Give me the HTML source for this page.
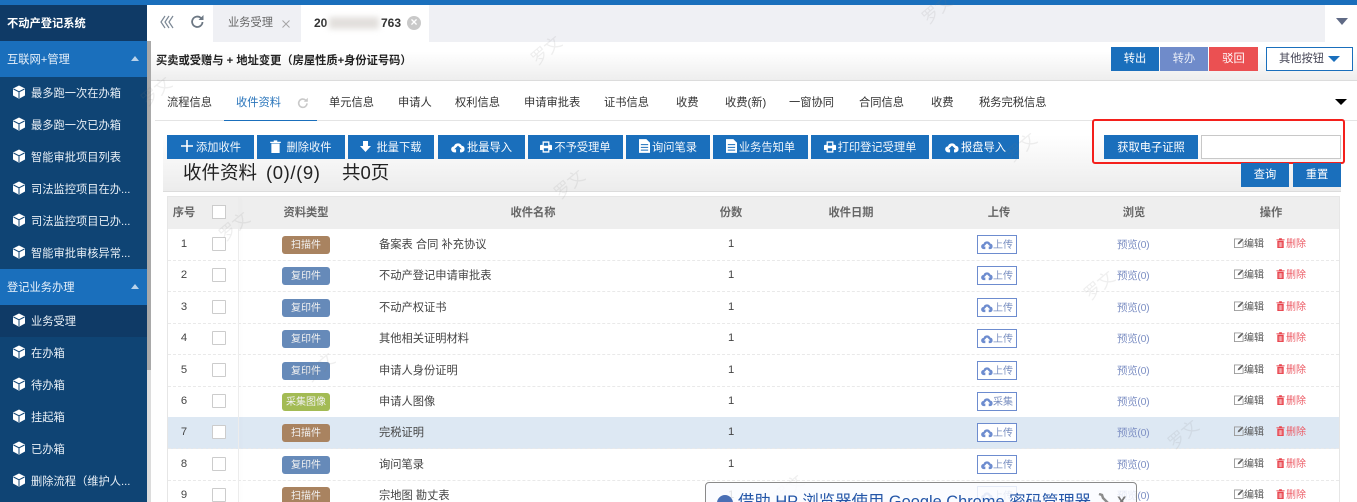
<!DOCTYPE html>
<html lang="zh-CN"><head><meta charset="utf-8"><title>不动产登记系统</title>
<style>
html,body{margin:0;padding:0;width:1357px;height:502px;overflow:hidden;background:#fff}
body{position:relative;font:11.25px/18px "Liberation Sans","Noto Sans CJK SC",sans-serif;color:#333}
div,span,svg{position:absolute;box-sizing:border-box;white-space:nowrap}
.sec{left:0;width:147px;height:36px;background:#1a6fbc;color:#e8f1fa;line-height:38px;padding-left:7px}
.sec i{position:absolute;left:131px;top:15px;width:0;height:0;border:4px solid transparent;border-top:0;border-left-width:4px;border-bottom:5px solid #b9d2ea}
.it{left:0;width:147px;height:32px;line-height:34px;color:#e9f0f7;padding-left:31px}
.it svg{left:12px;top:8px}
.nv{top:93px;color:#333;line-height:20px}
.b{top:135px;height:24px;background:#1a6fbc;color:#f2f7fc;line-height:26px;text-align:center}
.b svg{position:static;vertical-align:-2px;margin-right:2px}
.t{top:205px;color:#666;font-weight:bold;transform:translateX(-50%);line-height:16px}
.r{left:168px;width:1171px;height:32px;border-bottom:1px dashed #e9e9e9}
.r .n{left:0;width:32px;text-align:center;top:6px;color:#444}
.r .c{left:44px;top:8px;width:14px;height:14px;border:1px solid #ccc;background:#fff;border-radius:1px}
.bd{left:114px;top:7px;width:48px;height:18px;border-radius:3px;color:#f1f1f1;text-align:center;line-height:20px;font-size:10px}
.s{background:#a98360}.f{background:#668ab9}.g{background:#a3bb54}
.nm{left:211px;top:7px;color:#444}
.q{left:560px;top:6px;color:#444}
.u{left:809px;top:6px;width:40px;height:19px;border:1px solid #6d8ccf;color:#7a8fc0;line-height:19px;padding-left:15px;background:#fff;font-size:10px}
.u svg{left:3px;top:4px}
.p{left:949px;top:7px;color:#7e90c4;font-size:10.5px;letter-spacing:-.3px}
.e{left:1076px;top:7px;color:#555;font-size:10px}
.d{left:1118px;top:7px;color:#ec5a64;font-size:10px}
.ei{left:1066px;top:9px}.di{left:1108px;top:9px}
.wm{width:36px;height:20px;text-align:center;color:rgba(120,120,120,.12);font-size:17px;transform:rotate(-40deg);line-height:20px}
</style></head><body>
<svg width="0" height="0" style="left:0;top:0"><defs>
<symbol id="cube" viewBox="0 0 14 14"><path d="M7 .5l6 3v7l-6 3.2-6-3.2v-7z" fill="#fff"/><path d="M1.500 4L7 6.800 12.500 4M7 6.800v6.500" stroke="#0f4474" stroke-width="1" fill="none"/></symbol>
<symbol id="cloud" viewBox="0 0 16 12"><path d="M4 11.500a3.500 3.500 0 0 1-.6-7A4.800 4.800 0 0 1 12.300 4a3.800 3.800 0 0 1 0 7.500h-2V8h2L8 3.800 3.800 8h2v3.500z" fill="currentColor"/></symbol>
<symbol id="doc" viewBox="0 0 12 15"><path d="M0 0h8l4 4v11H0z" fill="#fff"/><path d="M2 6h8M2 9h8M2 12h8" stroke="#1a6fbc"/></symbol>
<symbol id="pr" viewBox="0 0 14 13"><path d="M3 0h8v4h2a1 1 0 0 1 1 1v5h-3v3H3v-3H0V5a1 1 0 0 1 1-1h2zM4.500 1.500V5h5V1.500zM4.500 8v3.500h5V8z" fill="#fff" fill-rule="evenodd"/></symbol>
<symbol id="ed" viewBox="0 0 11 11"><path d="M8 1H.5v9.500H10V4" fill="none" stroke="#999"/><path d="M4 7l.6-2L9 .6l1.400 1.400L6 6.400z" fill="#666"/></symbol>
<symbol id="tr" viewBox="0 0 9 11"><path d="M0 1.500h3V.3h3v1.200h3v1H0zM1 3h7v8H1z" fill="#e8434c"/><path d="M3 4.500V10M4.500 4.500V10M6 4.500V10" stroke="#fff" stroke-width=".6"/></symbol>
</defs></svg>

<!-- top strip -->
<div style="left:0;top:0;width:1357px;height:5px;background:#1a6fbc"></div>

<!-- sidebar -->
<div style="left:0;top:5px;width:147px;height:497px;background:#0f4474"></div>
<div style="left:147px;top:41px;width:4px;height:461px;background:#dcdcdc"></div>
<div style="left:147px;top:41px;width:4px;height:329px;background:#a9a9a9"></div>
<div style="left:0;top:5px;width:147px;height:36px;background:#0f3a66;color:#fff;line-height:38px;padding-left:7px;font-weight:bold">不动产登记系统</div>
<div class="sec" style="top:41px">互联网+管理<i></i></div>
<div class="it" style="top:77px"><svg width="14" height="14"><use href="#cube"/></svg>最多跑一次在办箱</div>
<div class="it" style="top:109px"><svg width="14" height="14"><use href="#cube"/></svg>最多跑一次已办箱</div>
<div class="it" style="top:141px"><svg width="14" height="14"><use href="#cube"/></svg>智能审批项目列表</div>
<div class="it" style="top:173px"><svg width="14" height="14"><use href="#cube"/></svg>司法监控项目在办...</div>
<div class="it" style="top:205px"><svg width="14" height="14"><use href="#cube"/></svg>司法监控项目已办...</div>
<div class="it" style="top:237px"><svg width="14" height="14"><use href="#cube"/></svg>智能审批审核异常...</div>
<div class="sec" style="top:269px">登记业务办理<i></i></div>
<div class="it" style="top:305px;background:#0f3a66"><svg width="14" height="14"><use href="#cube"/></svg>业务受理</div>
<div class="it" style="top:337px"><svg width="14" height="14"><use href="#cube"/></svg>在办箱</div>
<div class="it" style="top:369px"><svg width="14" height="14"><use href="#cube"/></svg>待办箱</div>
<div class="it" style="top:401px"><svg width="14" height="14"><use href="#cube"/></svg>挂起箱</div>
<div class="it" style="top:433px"><svg width="14" height="14"><use href="#cube"/></svg>已办箱</div>
<div class="it" style="top:465px"><svg width="14" height="14"><use href="#cube"/></svg>删除流程（维护人...</div>

<!-- tab bar -->
<div style="left:151px;top:5px;width:1206px;height:37px;background:#eff0f4"></div>
<div style="left:151px;top:5px;width:62px;height:37px;background:#fff"></div>
<svg style="left:160px;top:15px" width="14" height="14" viewBox="0 0 14 14"><path d="M5 1L1 7l4 6M9 1L5 7l4 6M13 1L9 7l4 6" fill="none" stroke="#7b8794" stroke-width="1.200"/></svg>
<svg style="left:190px;top:14px" width="15" height="15" viewBox="0 0 15 15"><path d="M12.500 8a5.200 5.200 0 1 1-1.600-4" fill="none" stroke="#6d7884" stroke-width="1.800"/><path d="M13.500 1v5h-5z" fill="#6d7884"/></svg>
<div style="left:228px;top:14px;color:#666">业务受理</div>
<svg style="left:282px;top:20px" width="8" height="8" viewBox="0 0 8 8"><path d="M.5.5l7 7M7.500.5l-7 7" stroke="#a5a5a5" stroke-width="1"/></svg>
<div style="left:301px;top:5px;width:128px;height:37px;background:#fff"></div>
<div style="left:314px;top:14px;color:#333;font-weight:bold;font-size:12px">20</div>
<div style="left:329px;top:17px;width:50px;height:12px;background:#e2dfdc;filter:blur(3px)"></div>
<div style="left:381px;top:14px;color:#333;font-weight:bold;font-size:12px">763</div>
<div style="left:407px;top:16px;width:14px;height:14px;border-radius:50%;background:#c9c9c9;color:#fff;text-align:center;line-height:13px;font-weight:bold;font-size:12px">×</div>
<div style="left:1325px;top:5px;width:32px;height:37px;background:#fff"></div>
<div style="left:1336px;top:18px;width:0;height:0;border-left:6px solid transparent;border-right:6px solid transparent;border-top:7px solid #5f6a85"></div>

<!-- title bar -->
<div style="left:151px;top:42px;width:1206px;height:39px;background:linear-gradient(#fff 25%,#eeeeee);border-bottom:1px solid #dcdcdc"></div>
<div style="left:156px;top:52px;color:#222;font-weight:bold;font-size:11.25px">买卖或受赠与 + 地址变更（房屋性质+身份证号码）</div>
<div style="left:1111px;top:47px;width:48px;height:24px;background:#1a6fbc;color:#fff;text-align:center;line-height:24px">转出</div>
<div style="left:1160px;top:47px;width:48px;height:24px;background:#6f8bca;color:#e9edf7;text-align:center;line-height:24px">转办</div>
<div style="left:1209px;top:47px;width:49px;height:24px;background:#eb5052;color:#fff;text-align:center;line-height:24px">驳回</div>
<div style="left:1266px;top:47px;width:87px;height:24px;background:#fff;border:1px solid #1a6fbc;color:#445;line-height:22px;padding-left:12px">其他按钮</div>
<div style="left:1328px;top:56px;width:0;height:0;border-left:6px solid transparent;border-right:6px solid transparent;border-top:6px solid #1a6fbc"></div>

<!-- nav tabs -->
<div style="left:155px;top:120px;width:1202px;height:1px;background:#e4e4e4"></div>
<div style="left:224px;top:120px;width:93px;height:1px;background:#1a6fbc"></div>
<div class="nv" style="left:167px">流程信息</div>
<div class="nv" style="left:236px;color:#2a75bb">收件资料</div>
<svg style="left:297px;top:97px" width="12" height="12" viewBox="0 0 15 15"><path d="M12.500 8a5.200 5.200 0 1 1-1.600-4" fill="none" stroke="#c9c9c9" stroke-width="2"/><path d="M13.500 1v5h-5z" fill="#c9c9c9"/></svg>
<div class="nv" style="left:329px">单元信息</div>
<div class="nv" style="left:398px">申请人</div>
<div class="nv" style="left:455px">权利信息</div>
<div class="nv" style="left:524px">申请审批表</div>
<div class="nv" style="left:604px">证书信息</div>
<div class="nv" style="left:676px">收费</div>
<div class="nv" style="left:725px">收费(新)</div>
<div class="nv" style="left:789px">一窗协同</div>
<div class="nv" style="left:859px">合同信息</div>
<div class="nv" style="left:931px">收费</div>
<div class="nv" style="left:979px">税务完税信息</div>
<div style="left:1335px;top:99px;width:0;height:0;border-left:6px solid transparent;border-right:6px solid transparent;border-top:6px solid #000"></div>

<!-- toolbar panel -->
<div style="left:163px;top:121px;width:1178px;height:71px;background:linear-gradient(#fff 20%,#ececec);border-bottom:1px solid #dcdcdc"></div>
<div class="b" style="left:167px;width:87px"><svg width="14" height="14" viewBox="0 0 14 14"><path d="M7 1v12M1 7h12" stroke="#fff" stroke-width="1.600"/></svg>添加收件</div>
<div class="b" style="left:257px;width:88px"><svg width="11" height="13" viewBox="0 0 9 11"><path d="M0 1.500h3V.3h3v1.200h3v1H0zM1 3h7v8H1z" fill="#fff"/></svg>&nbsp;删除收件</div>
<div class="b" style="left:348px;width:86px"><svg width="11" height="12" viewBox="0 0 11 12"><path d="M3 0h5v5h3l-5.500 6L0 5h3z" fill="#fff"/></svg>&nbsp;批量下载</div>
<div class="b" style="left:438px;width:87px;color:#fff"><svg width="14" height="11"><use href="#cloud"/></svg>批量导入</div>
<div class="b" style="left:528px;width:95px"><svg width="12" height="12"><use href="#pr"/></svg>不予受理单</div>
<div class="b" style="left:626px;width:84px"><svg width="11" height="14"><use href="#doc"/></svg>询问笔录</div>
<div class="b" style="left:713px;width:95px"><svg width="11" height="14"><use href="#doc"/></svg>业务告知单</div>
<div class="b" style="left:811px;width:118px"><svg width="12" height="12"><use href="#pr"/></svg>打印登记受理单</div>
<div class="b" style="left:932px;width:87px;color:#fff"><svg width="14" height="11"><use href="#cloud"/></svg>报盘导入</div>

<div style="left:1104px;top:135px;width:94px;height:24px;background:#1a6fbc;color:#fff;text-align:center;line-height:26px">获取电子证照</div>
<div style="left:1201px;top:135px;width:140px;height:24px;background:#fff;border:1px solid #c8c8c8"></div>
<div style="left:1092px;top:119px;width:253px;height:45px;border:2px solid #f4201c;border-radius:3px"></div>

<div style="left:183px;top:161px;font-size:18.5px;line-height:24px;color:#222">收件资料</div>
<div style="left:266px;top:161px;font-size:18.5px;line-height:24px;color:#222;letter-spacing:.6px">(0)/(9)</div>
<div style="left:342px;top:161px;font-size:18.5px;line-height:24px;color:#222">共0页</div>
<div style="left:1241px;top:163px;width:48px;height:24px;background:#1a6fbc;color:#fff;text-align:center;line-height:24px">查询</div>
<div style="left:1293px;top:163px;width:48px;height:24px;background:#1a6fbc;color:#fff;text-align:center;line-height:24px">重置</div>

<!-- table -->
<div style="left:167px;top:196px;width:1173px;height:306px;border:1px solid #e6e6e6;border-bottom:0;background:#fff"></div>
<div style="left:168px;top:197px;width:1171px;height:32px;background:#eeeeee"></div>
<div class="t" style="left:184px">序号</div>
<div style="left:212px;top:205px;width:14px;height:14px;border:1px solid #ccc;background:#fff"></div>
<div class="t" style="left:306px">资料类型</div>
<div class="t" style="left:533px">收件名称</div>
<div class="t" style="left:731px">份数</div>
<div class="t" style="left:851px">收件日期</div>
<div class="t" style="left:999px">上传</div>
<div class="t" style="left:1134px">浏览</div>
<div class="t" style="left:1271px">操作</div>

<div class="r" style="top:229px"><span class="n">1</span><span class="c"></span><span class="bd s">扫描件</span><span class="nm">备案表 合同 补充协议</span><span class="q">1</span><span class="u"><svg width="12" height="10" style="color:#6d8ccf"><use href="#cloud"/></svg>上传</span><span class="p">预览(0)</span><svg class="ei" width="10" height="10"><use href="#ed"/></svg><span class="e">编辑</span><svg class="di" width="9" height="10"><use href="#tr"/></svg><span class="d">删除</span></div>
<div class="r" style="top:260px"><span class="n">2</span><span class="c"></span><span class="bd f">复印件</span><span class="nm">不动产登记申请审批表</span><span class="q">1</span><span class="u"><svg width="12" height="10" style="color:#6d8ccf"><use href="#cloud"/></svg>上传</span><span class="p">预览(0)</span><svg class="ei" width="10" height="10"><use href="#ed"/></svg><span class="e">编辑</span><svg class="di" width="9" height="10"><use href="#tr"/></svg><span class="d">删除</span></div>
<div class="r" style="top:292px"><span class="n">3</span><span class="c"></span><span class="bd f">复印件</span><span class="nm">不动产权证书</span><span class="q">1</span><span class="u"><svg width="12" height="10" style="color:#6d8ccf"><use href="#cloud"/></svg>上传</span><span class="p">预览(0)</span><svg class="ei" width="10" height="10"><use href="#ed"/></svg><span class="e">编辑</span><svg class="di" width="9" height="10"><use href="#tr"/></svg><span class="d">删除</span></div>
<div class="r" style="top:323px"><span class="n">4</span><span class="c"></span><span class="bd f">复印件</span><span class="nm">其他相关证明材料</span><span class="q">1</span><span class="u"><svg width="12" height="10" style="color:#6d8ccf"><use href="#cloud"/></svg>上传</span><span class="p">预览(0)</span><svg class="ei" width="10" height="10"><use href="#ed"/></svg><span class="e">编辑</span><svg class="di" width="9" height="10"><use href="#tr"/></svg><span class="d">删除</span></div>
<div class="r" style="top:355px"><span class="n">5</span><span class="c"></span><span class="bd f">复印件</span><span class="nm">申请人身份证明</span><span class="q">1</span><span class="u"><svg width="12" height="10" style="color:#6d8ccf"><use href="#cloud"/></svg>上传</span><span class="p">预览(0)</span><svg class="ei" width="10" height="10"><use href="#ed"/></svg><span class="e">编辑</span><svg class="di" width="9" height="10"><use href="#tr"/></svg><span class="d">删除</span></div>
<div class="r" style="top:386px"><span class="n">6</span><span class="c"></span><span class="bd g">采集图像</span><span class="nm">申请人图像</span><span class="q">1</span><span class="u"><svg width="12" height="10" style="color:#6d8ccf"><use href="#cloud"/></svg>采集</span><span class="p">预览(0)</span><svg class="ei" width="10" height="10"><use href="#ed"/></svg><span class="e">编辑</span><svg class="di" width="9" height="10"><use href="#tr"/></svg><span class="d">删除</span></div>
<div class="r" style="top:417px;background:#dde8f3"><span class="n">7</span><span class="c"></span><span class="bd s">扫描件</span><span class="nm">完税证明</span><span class="q">1</span><span class="u"><svg width="12" height="10" style="color:#6d8ccf"><use href="#cloud"/></svg>上传</span><span class="p">预览(0)</span><svg class="ei" width="10" height="10"><use href="#ed"/></svg><span class="e">编辑</span><svg class="di" width="9" height="10"><use href="#tr"/></svg><span class="d">删除</span></div>
<div class="r" style="top:449px"><span class="n">8</span><span class="c"></span><span class="bd f">复印件</span><span class="nm">询问笔录</span><span class="q">1</span><span class="u"><svg width="12" height="10" style="color:#6d8ccf"><use href="#cloud"/></svg>上传</span><span class="p">预览(0)</span><svg class="ei" width="10" height="10"><use href="#ed"/></svg><span class="e">编辑</span><svg class="di" width="9" height="10"><use href="#tr"/></svg><span class="d">删除</span></div>
<div class="r" style="top:480px"><span class="n">9</span><span class="c"></span><span class="bd s">扫描件</span><span class="nm">宗地图 勘丈表</span><span class="q">1</span><span class="u"><svg width="12" height="10" style="color:#6d8ccf"><use href="#cloud"/></svg>上传</span><span class="p">预览(0)</span><svg class="ei" width="10" height="10"><use href="#ed"/></svg><span class="e">编辑</span><svg class="di" width="9" height="10"><use href="#tr"/></svg><span class="d">删除</span></div>
<div style="left:238px;top:197px;width:1px;height:305px;background:#ececec;box-shadow:2px 0 3px rgba(0,0,0,.04)"></div>

<!-- watermarks -->
<div class="wm" style="left:139px;top:82px">罗文</div>
<div class="wm" style="left:529px;top:41px">罗文</div>
<div class="wm" style="left:920px;top:0">罗文</div>
<div class="wm" style="left:1004px;top:138px">罗文</div>
<div class="wm" style="left:552px;top:175px">罗文</div>
<div class="wm" style="left:217px;top:217px">罗文</div>
<div class="wm" style="left:1082px;top:276px">罗文</div>
<div class="wm" style="left:302px;top:358px">罗文</div>
<div class="wm" style="left:1166px;top:425px">罗文</div>
<div class="wm" style="left:771px;top:480px">罗文</div>

<!-- password popup -->
<div style="left:705px;top:482px;width:432px;height:30px;border:1px solid #8a8a8a;border-radius:4px 4px 0 0;background:rgba(250,252,255,.85)"></div>
<div style="left:717px;top:495px;width:16px;height:16px;border-radius:50%;background:#4a6fb5"></div>
<div style="left:738px;top:492px;font-size:16.4px;line-height:20px;color:#2456a8">借助 HP 浏览器使用 Google Chrome 密码管理器</div>
<svg style="left:1097px;top:493px" width="13" height="12" viewBox="0 0 13 12"><path d="M2 1l3 1 1 3 6 6" fill="none" stroke="#8c8c8c" stroke-width="2.500"/></svg>
<div style="left:1117px;top:492px;font-size:14px;line-height:18px;color:#777;font-weight:bold">X</div>
</body></html>
